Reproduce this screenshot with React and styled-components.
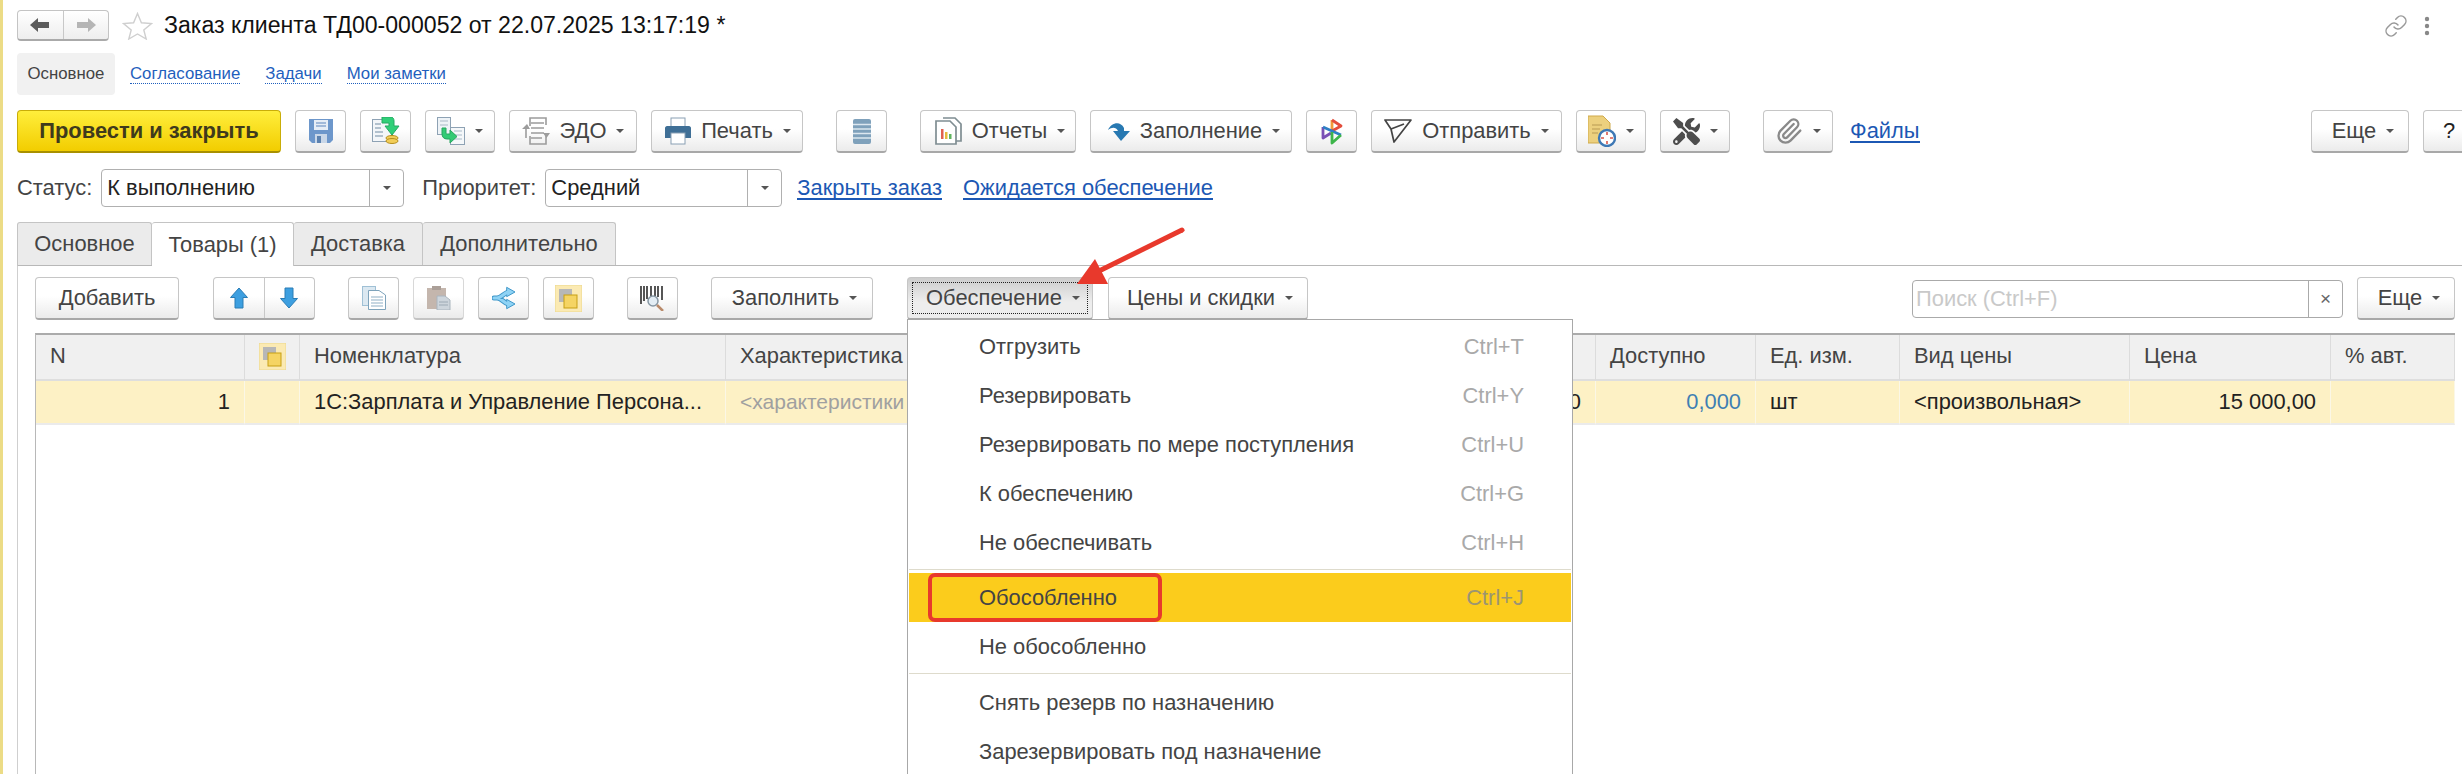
import React from "react";
import styled, { createGlobalStyle } from "styled-components";
import { FaTools } from "react-icons/fa";
import { Paperclip, Link as LinkIcon } from "lucide-react";

const Global = createGlobalStyle`
	html, body {
		margin: 0;
		padding: 0;
		background: #fff;
	}
	* {
		box-sizing: border-box;
	}
`;

const Page = styled.div`
	position: relative;
	width: 2462px;
	height: 774px;
	overflow: hidden;
	display: flex;
	flex-direction: column;
	padding: 10px 0 0 17px;
	background: #fff;
	box-shadow: inset 3px 0 0 #ecdc86;
	font-family: "Liberation Sans", Arial, sans-serif;
	font-size: 21.9px;
	color: #444;
`;

const TitleRow = styled.div`
	display: flex;
	align-items: center;
	height: 31px;
	flex: none;
`;
const NavGroup = styled.div`
	display: flex;
	width: 92px;
	height: 31px;
	border: 1px solid #c4c4c4;
	border-bottom: 2px solid #aaa;
	border-radius: 4px;
	background: linear-gradient(#fff, #eee);
`;
const NavPart = styled.div`
	flex: 1;
	align-self: stretch;
	display: flex;
	align-items: center;
	justify-content: center;
	border-left: ${(p) => (p.$divided ? "1px solid #c8c8c8" : "none")};
`;
const StarShape = styled.svg`
	margin-left: 13px;
	flex: none;
`;
const Title = styled.h1`
	margin: 0 0 0 11px;
	font-size: 23.1px;
	font-weight: normal;
	color: #111;
	white-space: nowrap;
`;
const TitleTools = styled.div`
	margin-left: auto;
	width: 46px;
	margin-right: 32px;
	display: flex;
	align-items: center;
	justify-content: space-between;
`;

const SectionRow = styled.div`
	display: flex;
	align-items: center;
	height: 42px;
	margin-top: 12px;
	gap: 25px;
	flex: none;
	font-size: 16.8px;
`;
const SectionCurrent = styled.div`
	width: 98px;
	height: 42px;
	display: flex;
	align-items: center;
	justify-content: center;
	background: #f1f1f1;
	border-radius: 4px;
	margin-right: -10px;
`;
const SectionLink = styled.a`
	color: #1f5fbd;
	border-bottom: 1px dotted #1f5fbd;
	line-height: 19px;
`;

const Toolbar = styled.div`
	display: flex;
	align-items: center;
	gap: 14px;
	height: 43px;
	flex: none;
	margin-top: ${(p) => p.$top || 0}px;
`;
const Button = styled.div`
	flex: none;
	position: relative;
	display: flex;
	align-items: center;
	justify-content: center;
	gap: ${(p) => p.$gap ?? 10}px;
	width: ${(p) => p.$w}px;
	height: 43px;
	margin-left: ${(p) => p.$split || 0}px;
	padding-left: ${(p) => p.$pad || 0}px;
	white-space: nowrap;
	border: 1px solid #c6c6c6;
	border-bottom: 2px solid #a8a8a8;
	border-radius: 4px;
	color: #444;
	background: ${(p) =>
		p.$pressed ? "linear-gradient(#cdcdcd, #ededed 60%)" : "linear-gradient(#fff 45%, #ebebeb)"};
	${(p) => p.$faded && "border-color: #d8d8d8; border-bottom-color: #c4c4c4;"}
`;
const PrimaryButton = styled(Button)`
	border: 1px solid #c9ad08;
	border-bottom: 2px solid #a89000;
	background: linear-gradient(#ffee3c, #f2cd00);
	font-weight: bold;
	color: #3f3a1c;
`;
const FocusMark = styled.span`
	position: absolute;
	inset: 4px;
	border: 1px dotted #222;
`;
const Caret = styled.i`
	flex: none;
	width: 0;
	height: 0;
	border-left: 4px solid transparent;
	border-right: 4px solid transparent;
	border-top: 4px solid #555;
`;
const HelpMark = styled.span`
	color: #222;
	margin-right: 8px;
`;
const UnderLink = styled.a`
	color: #1c58b4;
	border-bottom: 2px solid #1c58b4;
	line-height: 21px;
	white-space: nowrap;
	margin-left: ${(p) => p.$split || 0}px;
`;
const Pushed = styled.div`
	margin-left: auto;
	margin-right: ${(p) => p.$end || 0}px;
	display: flex;
	gap: 14px;
	align-items: center;
`;

const StatusRow = styled.div`
	display: flex;
	align-items: center;
	height: 38px;
	margin-top: 16px;
	flex: none;
	white-space: nowrap;
`;
const Select = styled.div`
	display: flex;
	align-items: center;
	width: ${(p) => p.$w}px;
	height: 38px;
	margin: 0 18px 0 9px;
	padding-left: 5px;
	border: 1px solid #b0b0b0;
	border-radius: 4px;
	color: #222;
`;
const SelectButton = styled.div`
	margin-left: auto;
	width: 34px;
	height: 100%;
	display: flex;
	align-items: center;
	justify-content: center;
	border-left: 1px solid #b0b0b0;
`;

const TabRow = styled.div`
	display: flex;
	height: 43px;
	margin-top: 15px;
	flex: none;
`;
const Tab = styled.div`
	width: ${(p) => p.$w}px;
	display: flex;
	align-items: center;
	justify-content: center;
	border: 1px solid #c4c4c4;
	border-left-width: ${(p) => (p.$first ? 1 : 0)}px;
	border-bottom: none;
	border-radius: 3px 3px 0 0;
	background: ${(p) => (p.$active ? "#fff" : "#ebebeb")};
	margin-bottom: ${(p) => (p.$active ? -1 : 0)}px;
	position: relative;
	z-index: 1;
`;

const Panel = styled.div`
	flex: 1;
	min-height: 0;
	display: flex;
	flex-direction: column;
	border-top: 1px solid #b8b8b8;
	border-left: 1px solid #cfcfcf;
	padding: 11px 0 0 17px;
`;
const Anchor = styled.div`
	position: relative;
	flex: none;
	z-index: 3;
	margin-left: 20px;
`;
const SearchBox = styled.div`
	display: flex;
	align-items: center;
	width: 431px;
	height: 38px;
	border: 1px solid #aaa;
	border-radius: 4px;
	color: #c9c9c9;
	padding-left: 3px;
`;
const SearchClear = styled.div`
	margin-left: auto;
	width: 34px;
	height: 100%;
	display: flex;
	align-items: center;
	justify-content: center;
	border-left: 1px solid #aaa;
	color: #666;
	font-size: 19px;
`;

const Table = styled.div`
	flex: 1;
	margin-top: 13px;
	width: 2420px;
	border-top: 2px solid #ababab;
	border-left: 1px solid #b8b8b8;
	display: grid;
	grid-template-columns: 209px 55px 426px 394px 476px 160px 144px 230px 201px 124px;
	grid-template-rows: 46px 44px;
	align-content: start;
`;
const HeadCell = styled.div`
	display: flex;
	align-items: center;
	padding: 0 0 2px ${(p) => (p.$center ? 0 : 14)}px;
	height: 46px;
	background: #f0f0f0;
	border-right: 1px solid #dcdcdc;
	border-bottom: 2px solid #dedede;
	white-space: nowrap;
	overflow: hidden;
	justify-content: ${(p) => (p.$center ? "center" : "flex-start")};
`;
const Cell = styled.div`
	display: flex;
	align-items: center;
	justify-content: ${(p) => (p.$right ? "flex-end" : "flex-start")};
	padding: ${(p) => (p.$right ? "0 14px 0 0" : "0 0 0 14px")};
	background: #fdf1c5;
	border-right: 1px solid #fbf7e6;
	border-bottom: 2px solid #ebebeb;
	color: ${(p) => p.$color || "#222"};
	font-size: ${(p) => p.$size || 21.9}px;
	white-space: nowrap;
`;

const Menu = styled.div`
	position: absolute;
	top: calc(100% - 1px);
	left: 0;
	width: 666px;
	height: 480px;
	padding: 2px 1px 0;
	background: #fff;
	border: 1px solid #a8a8a8;
`;
const MenuRow = styled.div`
	position: relative;
	display: flex;
	align-items: center;
	justify-content: space-between;
	height: 49px;
	padding: 0 47px 0 70px;
	white-space: nowrap;
	background: ${(p) => (p.$hot ? "#fbcc1c" : "transparent")};
`;
const Shortcut = styled.span`
	color: ${(p) => (p.$hot ? "#9c9572" : "#a9a9a9")};
`;
const MenuLine = styled.div`
	height: 1px;
	margin: ${(p) => p.$margin};
	background: #dedbcc;
`;
const RedFrame = styled.span`
	position: absolute;
	left: 19px;
	top: 0;
	width: 234px;
	height: 49px;
	border: 4px solid #e8392c;
	border-radius: 7px;
`;
const Pointer = styled.svg`
	position: absolute;
	left: 160px;
	top: -50px;
	overflow: visible;
`;
const MoveShape = styled.svg`
	transform: ${(p) => (p.$down ? "scaleY(-1)" : "none")};
`;

const Arrow = ({ dir, color }) => (
	<svg width="20" height="14" viewBox="0 0 20 14">
		<path
			d={dir === "left" ? "M0 7L8 0V4H19V10H8V14Z" : "M20 7L12 0V4H1V10H12V14Z"}
			fill={color}
		/>
	</svg>
);

const Star = () => (
	<StarShape width="31" height="28" viewBox="0 0 31 28">
		<path
			d="M15.5 1.5L19.4 10.8L29.5 11.5L21.8 18L24.2 27L15.5 22L6.8 27L9.2 18L1.5 11.5L11.6 10.8Z"
			fill="#fff"
			stroke="#cfcfcf"
			strokeWidth="1.4"
		/>
	</StarShape>
);

const Dots = () => (
	<svg width="6" height="20" viewBox="0 0 6 20">
		<circle cx="3" cy="3" r="2.2" fill="#888" />
		<circle cx="3" cy="10" r="2.2" fill="#888" />
		<circle cx="3" cy="17" r="2.2" fill="#888" />
	</svg>
);

const SaveIcon = () => (
	<svg width="24" height="24" viewBox="0 0 24 24">
		<path d="M0 0H24V21L21 24H3L0 21Z" fill="#6d97cb" />
		<rect x="5" y="1" width="14" height="10" fill="#e6edf6" />
		<path d="M7 4H17M7 7H17" stroke="#8aa8cf" strokeWidth="1.4" />
		<rect x="6" y="15" width="12" height="9" fill="#c9d7e8" />
		<rect x="8" y="17" width="4" height="7" fill="#5c82b0" />
	</svg>
);

const PostIcon = () => (
	<svg width="28" height="28" viewBox="0 0 28 28">
		<rect x="0.5" y="2.5" width="20" height="22" fill="#f3f6f9" stroke="#8ea2b4" />
		<path d="M3 7H9M3 11H9M3 15H11M3 19H11" stroke="#9db0c0" strokeWidth="1.4" />
		<ellipse cx="20" cy="21" rx="6" ry="2.5" fill="#f2cd57" stroke="#b58e1d" />
		<ellipse cx="20" cy="24" rx="6" ry="2.5" fill="#f2cd57" stroke="#b58e1d" />
		<path d="M10 0H19C21 0 22 2 22 4V9H27L20 18L13 9H17V6H10Z" fill="#30cf78" stroke="#25a862" />
	</svg>
);

const ChainIcon = () => (
	<svg width="28" height="28" viewBox="0 0 28 28">
		<rect x="0.5" y="0.5" width="13" height="17" fill="#eef3f7" stroke="#8ea2b4" />
		<rect x="13.5" y="10.5" width="14" height="17" fill="#f5f8fa" stroke="#8ea2b4" />
		<path d="M17 14H25M17 18H25M17 22H25M3 4H11M3 8H11" stroke="#a9b9c7" strokeWidth="1.2" />
		<path d="M5 11H9V16C9 17 10 17 11 17H13V13L20 19.5L13 26V22H10C7 22 5 20 5 17Z" fill="#33cb75" stroke="#27a55f" />
	</svg>
);

const EdoIcon = () => (
	<svg width="28" height="30" viewBox="0 0 28 30" fill="none" stroke="#9c9c9c" strokeWidth="1.6">
		<path d="M8 10V2H24V9M8 20V28H24V20" />
		<path d="M9 7H22M9 12H22M9 17H22M9 22H20" />
		<path d="M0 13L5 8L8 13ZM21 17H28L24.500 22Z" fill="#9c9c9c" stroke="none" />
		<path d="M4 13V22" />
	</svg>
);

const PrintIcon = () => (
	<svg width="26" height="28" viewBox="0 0 26 28">
		<rect x="6" y="1" width="14" height="10" fill="#fff" stroke="#8aa0b4" />
		<path d="M2 9H24C25 9 26 10 26 11V21H0V11C0 10 1 9 2 9Z" fill="#3f6f96" />
		<rect x="6" y="16" width="14" height="11" fill="#fff" stroke="#8aa0b4" />
	</svg>
);

const StackIcon = () => (
	<svg width="18" height="25" viewBox="0 0 18 25">
		<rect width="18" height="25" rx="2" fill="#7fa1bb" />
		<path d="M0 5.500H18M0 10H18M0 14.500H18M0 19H18" stroke="#dce7ef" strokeWidth="1.5" />
	</svg>
);

const ReportIcon = () => (
	<svg width="28" height="28" viewBox="0 0 28 28" fill="#fff" stroke="#7f8d92" strokeWidth="1.7">
		<path d="M9 1H21L27 7V24H22" />
		<path d="M2 4H16L22 10V27H2Z" />
		<rect x="7" y="12" width="2.500" height="10" fill="#e0604f" stroke="none" />
		<rect x="11" y="15" width="2.500" height="7" fill="#e5b93c" stroke="none" />
		<rect x="15" y="17" width="2.500" height="5" fill="#5fb55f" stroke="none" />
	</svg>
);

const FillIcon = () => (
	<svg width="22" height="20" viewBox="0 0 22 20">
		<path d="M0 9C3 2 12 -1 16 7V10H22L13 20L5 10H10C8 6 4 6 0 9Z" fill="#2879b2" />
	</svg>
);

const BrandIcon = () => (
	<svg width="22" height="27" viewBox="0 0 22 27" fill="none" strokeWidth="2.8" strokeLinejoin="round">
		<path d="M11 2V13" stroke="#f19a38" />
		<path d="M11 2L20 8L11 13" stroke="#e34c3a" />
		<path d="M2 9V20L10 15" stroke="#7a4fb5" />
		<path d="M2 9L20 17" stroke="#2d7fc4" />
		<path d="M20 17L11 25V14" stroke="#3db54a" />
	</svg>
);

const SendIcon = () => (
	<svg width="28" height="26" viewBox="0 0 28 26" fill="none" stroke="#444" strokeWidth="1.7" strokeLinejoin="round">
		<path d="M1 2H27L10 24L7 11Z" />
		<path d="M7 11L20 6" />
	</svg>
);

const ClockDocIcon = () => (
	<svg width="28" height="32" viewBox="0 0 28 32">
		<path d="M0 1H15L22 8V28H0Z" fill="#ecd07e" stroke="#cfa94b" />
		<path d="M4 10H14M4 14H12M4 18H10" stroke="#c9ac62" strokeWidth="1.3" />
		<circle cx="19" cy="23" r="8" fill="#fff" stroke="#3e78b5" strokeWidth="2.4" />
		<path d="M19 17V20M19 26V29M13 23H16M22 23H25" stroke="#d9574a" strokeWidth="1.6" />
	</svg>
);

const MoveIcon = ({ down }) => (
	<MoveShape $down={down} width="18" height="22" viewBox="0 0 18 22">
		<path d="M9 1L17.500 10.500H13V21H5V10.500H0.500Z" fill="#3d9fe0" stroke="#2a7cb5" strokeLinejoin="round" />
	</MoveShape>
);

const CopyIcon = () => (
	<svg width="24" height="24" viewBox="0 0 24 24">
		<rect x="0.5" y="0.5" width="13" height="19" fill="#dbe8f1" stroke="#9fc0d5" />
		<path d="M6.500 4.500H17L23.500 9V23.500H6.500Z" fill="#fff" stroke="#7ea3bb" />
		<path d="M9 11H21M9 14H21M9 17H21M9 20H21" stroke="#8fb0c5" strokeWidth="1.2" />
	</svg>
);

const PasteIcon = () => (
	<svg width="24" height="24" viewBox="0 0 24 24">
		<rect x="0" y="2" width="19" height="21" fill="#c4b6ad" />
		<rect x="5" y="0" width="9" height="4" fill="#ab9f98" />
		<path d="M10 10H18L23 14V24H10Z" fill="#cdd5dc" stroke="#aab5be" />
		<path d="M12 16H21M12 19H21" stroke="#9ca9b4" />
	</svg>
);

const MergeIcon = () => (
	<svg width="24" height="24" viewBox="0 0 24 24" fill="none" strokeLinecap="round">
		<path d="M2 12H5C9 12 11 8 16 6M5 12C9 12 11 16 16 18" stroke="#3f97c9" strokeWidth="5" />
		<path d="M15 1.500L23 6L15 10.500Z" fill="#8fd3f5" stroke="#3f97c9" strokeLinejoin="round" />
		<path d="M15 13.500L23 18L15 22.500Z" fill="#8fd3f5" stroke="#3f97c9" strokeLinejoin="round" />
		<path d="M2 12H5C9 12 11 8 16 6M5 12C9 12 11 16 16 18" stroke="#8fd3f5" strokeWidth="3" />
	</svg>
);

const ReserveIcon = () => (
	<svg width="27" height="27" viewBox="0 0 27 27">
		<rect width="27" height="27" fill="#fbeab3" stroke="#ecd88e" />
		<rect x="4" y="4" width="13" height="13" fill="#b7b7b7" />
		<rect x="9" y="10" width="13" height="13" fill="#f5d463" stroke="#c79f14" />
	</svg>
);

const BarcodeIcon = () => (
	<svg width="25" height="25" viewBox="0 0 25 25">
		<path d="M1 0V18M4 0V15M7 0V13M11 0V10M15 0V10M18 0V11M22 0V14" stroke="#444" strokeWidth="1.8" />
		<circle cx="13" cy="15" r="5" fill="#e3edf4" stroke="#8797a3" strokeWidth="1.5" />
		<path d="M17 19L23 25" stroke="#b98a6a" strokeWidth="2.5" />
	</svg>
);

const topTools = [
	{ w: 51, icon: <SaveIcon /> },
	{ w: 51, icon: <PostIcon /> },
	{ w: 70, icon: <ChainIcon />, caret: true },
	{ w: 128, icon: <EdoIcon />, text: "ЭДО", caret: true },
	{ w: 152, icon: <PrintIcon />, text: "Печать", caret: true, pad: 2 },
	{ w: 51, icon: <StackIcon />, split: 19 },
	{ w: 156, icon: <ReportIcon />, text: "Отчеты", caret: true, split: 19, pad: 3 },
	{ w: 202, icon: <FillIcon />, text: "Заполнение", caret: true, pad: 6 },
	{ w: 51, icon: <BrandIcon /> },
	{ w: 191, icon: <SendIcon />, text: "Отправить", caret: true },
	{ w: 70, icon: <ClockDocIcon />, caret: true },
	{ w: 70, icon: <FaTools size={27} color="#4d4d4d" />, caret: true },
	{ w: 70, icon: <Paperclip size={28} color="#8a8a8a" strokeWidth={2} />, caret: true, split: 19 },
];

const menuTop = [
	["Отгрузить", "Ctrl+T"],
	["Резервировать", "Ctrl+Y"],
	["Резервировать по мере поступления", "Ctrl+U"],
	["К обеспечению", "Ctrl+G"],
	["Не обеспечивать", "Ctrl+H"],
];

const headers = ["Характеристика", "", "Доступно", "Ед. изм.", "Вид цены", "Цена", "% авт."];

const App = () => {
	return (
		<Page>
			<Global />
			<TitleRow>
				<NavGroup>
					<NavPart>
						<Arrow dir="left" color="#5c5c5c" />
					</NavPart>
					<NavPart $divided>
						<Arrow dir="right" color="#b5b5b5" />
					</NavPart>
				</NavGroup>
				<Star />
				<Title>Заказ клиента ТД00-000052 от 22.07.2025 13:17:19 *</Title>
				<TitleTools>
					<LinkIcon size={24} color="#999" strokeWidth={1.5} />
					<Dots />
				</TitleTools>
			</TitleRow>

			<SectionRow>
				<SectionCurrent>Основное</SectionCurrent>
				<SectionLink>Согласование</SectionLink>
				<SectionLink>Задачи</SectionLink>
				<SectionLink>Мои заметки</SectionLink>
			</SectionRow>

			<Toolbar $top={15}>
				<PrimaryButton $w={264}>Провести и закрыть</PrimaryButton>
				{topTools.map((tool, i) => (
					<Button key={i} $w={tool.w} $split={tool.split} $pad={tool.pad}>
						{tool.icon}
						{tool.text && <span>{tool.text}</span>}
						{tool.caret && <Caret />}
					</Button>
				))}
				<UnderLink $split={3}>Файлы</UnderLink>
				<Pushed $end={-21}>
					<Button $w={98} $pad={6}>
						Еще
						<Caret />
					</Button>
					<Button $w={60}>
						<HelpMark>?</HelpMark>
					</Button>
				</Pushed>
			</Toolbar>

			<StatusRow>
				Статус:
				<Select $w={303}>
					К выполнению
					<SelectButton>
						<Caret />
					</SelectButton>
				</Select>
				Приоритет:
				<Select $w={237}>
					Средний
					<SelectButton>
						<Caret />
					</SelectButton>
				</Select>
				<UnderLink $split={-3}>Закрыть заказ</UnderLink>
				<UnderLink $split={21}>Ожидается обеспечение</UnderLink>
			</StatusRow>

			<TabRow>
				<Tab $w={135} $first>
					Основное
				</Tab>
				<Tab $w={142} $active>
					Товары (1)
				</Tab>
				<Tab $w={129}>Доставка</Tab>
				<Tab $w={193}>Дополнительно</Tab>
			</TabRow>

			<Panel>
				<Toolbar>
					<Button $w={144}>Добавить</Button>
					<Button $w={102} $split={20} $gap={0}>
						<NavPart>
							<MoveIcon />
						</NavPart>
						<NavPart $divided>
							<MoveIcon down />
						</NavPart>
					</Button>
					<Button $w={51} $split={19}>
						<CopyIcon />
					</Button>
					<Button $w={51} $faded>
						<PasteIcon />
					</Button>
					<Button $w={51}>
						<MergeIcon />
					</Button>
					<Button $w={51}>
						<ReserveIcon />
					</Button>
					<Button $w={51} $split={19}>
						<BarcodeIcon />
					</Button>
					<Button $w={162} $split={19} $pad={5}>
						Заполнить
						<Caret />
					</Button>
					<Anchor>
						<Button $w={186} $pressed $pad={6}>
							<FocusMark />
							Обеспечение
							<Caret />
						</Button>
						<Menu>
							{menuTop.map(([label, keys]) => (
								<MenuRow key={label}>
									{label}
									<Shortcut>{keys}</Shortcut>
								</MenuRow>
							))}
							<MenuLine $margin="2px 0 3px" />
							<MenuRow $hot>
								Обособленно
								<Shortcut $hot>Ctrl+J</Shortcut>
								<RedFrame />
							</MenuRow>
							<MenuRow>Не обособленно</MenuRow>
							<MenuLine $margin="2px 0 4px" />
							<MenuRow>Снять резерв по назначению</MenuRow>
							<MenuRow>Зарезервировать под назначение</MenuRow>
						</Menu>
						<Pointer width="120" height="60" viewBox="0 0 120 60">
							<path d="M115 3L30 45" stroke="#e8392c" strokeWidth="5" strokeLinecap="round" />
							<path d="M10 57H41L28 32Z" fill="#e8392c" />
						</Pointer>
					</Anchor>
					<Button $w={200} $split={1} $pad={4}>
						Цены и скидки
						<Caret />
					</Button>
					<Pushed $end={7}>
						<SearchBox>
							Поиск (Ctrl+F)
							<SearchClear>×</SearchClear>
						</SearchBox>
						<Button $w={98} $pad={6}>
							Еще
							<Caret />
						</Button>
					</Pushed>
				</Toolbar>

				<Table>
					<HeadCell>N</HeadCell>
					<HeadCell $center>
						<ReserveIcon />
					</HeadCell>
					<HeadCell>Номенклатура</HeadCell>
					{headers.map((label, i) => (
						<HeadCell key={i}>{label}</HeadCell>
					))}
					<Cell $right>1</Cell>
					<Cell />
					<Cell>1С:Зарплата и Управление Персона...</Cell>
					<Cell $color="#a0a0a0" $size={21}>
						&lt;характеристики
					</Cell>
					<Cell $right>0</Cell>
					<Cell $right $color="#3f7fb3">
						0,000
					</Cell>
					<Cell>шт</Cell>
					<Cell>&lt;произвольная&gt;</Cell>
					<Cell $right>15 000,00</Cell>
					<Cell />
				</Table>
			</Panel>
		</Page>
	);
};

export default App;
